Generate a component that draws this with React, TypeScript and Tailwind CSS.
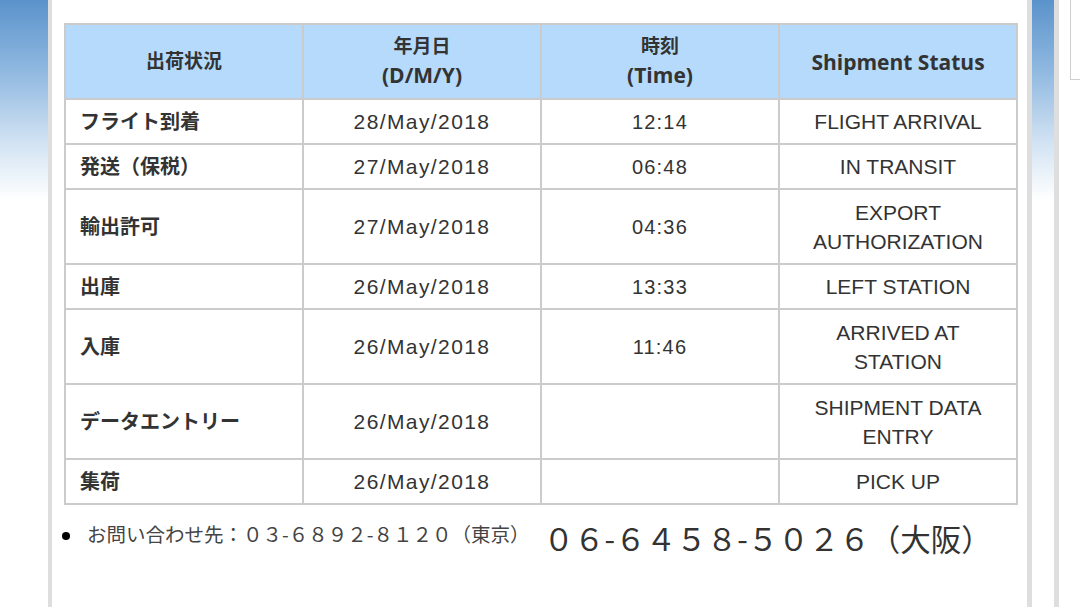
import React from "react";

type Row = {
  label: string;
  date: string;
  time: string;
  status: string[];
  tall?: boolean;
};

const rows: Row[] = [
  { label: "フライト到着", date: "28/May/2018", time: "12:14", status: ["FLIGHT ARRIVAL"] },
  { label: "発送（保税）", date: "27/May/2018", time: "06:48", status: ["IN TRANSIT"] },
  { label: "輸出許可", date: "27/May/2018", time: "04:36", status: ["EXPORT", "AUTHORIZATION"], tall: true },
  { label: "出庫", date: "26/May/2018", time: "13:33", status: ["LEFT STATION"] },
  { label: "入庫", date: "26/May/2018", time: "11:46", status: ["ARRIVED AT", "STATION"], tall: true },
  { label: "データエントリー", date: "26/May/2018", time: "", status: ["SHIPMENT DATA", "ENTRY"], tall: true },
  { label: "集荷", date: "26/May/2018", time: "", status: ["PICK UP"] },
];

const sideStrip =
  "bg-[linear-gradient(to_bottom,#5a93cb_0px,#8fb8e0_70px,#cfe1f2_140px,#ffffff_200px)]";

const cell = "border-2 border-[#cbcbcb]";

export default function App() {
  return (
    <div className="flex h-[607px] w-[1080px] overflow-hidden bg-white font-['Liberation_Sans','Noto_Sans_CJK_JP',sans-serif] text-[#333]">
      <div className={`w-[48px] shrink-0 ${sideStrip}`} />
      <div className="w-[4px] shrink-0 bg-[#dedede]" />

      <main className="w-[975px] shrink-0 bg-white pl-[12px] pt-[23px]">
        <table className="w-[952px] table-fixed border-collapse border-2 border-[#cbcbcb]">
          <thead>
            <tr className="h-[75px] bg-[#b5dafb]">
              <th className={`w-[238px] ${cell} text-[19px] font-bold leading-[28px]`}>出荷状況</th>
              <th className={`w-[238px] ${cell} text-[19px] font-bold leading-[28px]`}>
                年月日
                <br />
                <span className="font-['Open_Sans',sans-serif] text-[21px]">(D/M/Y)</span>
              </th>
              <th className={`w-[238px] ${cell} text-[19px] font-bold leading-[28px]`}>
                時刻
                <br />
                <span className="font-['Open_Sans',sans-serif] text-[21px]">(Time)</span>
              </th>
              <th className={`w-[238px] ${cell} font-['Open_Sans',sans-serif] text-[21px] font-bold leading-[28px]`}>
                Shipment Status
              </th>
            </tr>
          </thead>
          <tbody>
            {rows.map((r) => (
              <tr key={r.label} className={r.tall ? "h-[75px]" : "h-[45px]"}>
                <td className={`${cell} pl-[14px] text-[20px] font-bold`}>{r.label}</td>
                <td className={`${cell} text-center text-[21px] tracking-[1.4px]`}>{r.date}</td>
                <td className={`${cell} text-center text-[20px] tracking-[1.2px]`}>{r.time}</td>
                <td className={`${cell} text-center text-[21px] leading-[29px]`}>
                  {r.status.map((s) => (
                    <div key={s}>{s}</div>
                  ))}
                </td>
              </tr>
            ))}
          </tbody>
        </table>

        <div className="mt-[16px] flex items-start font-['Noto_Sans_CJK_JP',sans-serif]">
          <span className="mt-[11px] ml-[-2px] h-[8px] w-[8px] shrink-0 rounded-full bg-black" />
          <span className="ml-[17px] text-[19.5px] leading-[26px] text-[#444]">
            お問い合わせ先：０３-６８９２-８１２０（東京）
          </span>
          <span className="ml-[14px] mt-[1px] text-[30.5px] leading-[32px] text-[#333]">
            ０６-６４５８-５０２６（大阪）
          </span>
        </div>
      </main>

      <div className="w-[5px] shrink-0 bg-[#dedede]" />
      <div className={`w-[22px] shrink-0 ${sideStrip}`} />
      <div className="w-[5px] shrink-0 bg-[#dedede]" />
      <div className="flex-1 bg-white pl-[11px]">
        <div className="h-[80px] border-b border-l border-[#cfcfcf]" />
      </div>
    </div>
  );
}
